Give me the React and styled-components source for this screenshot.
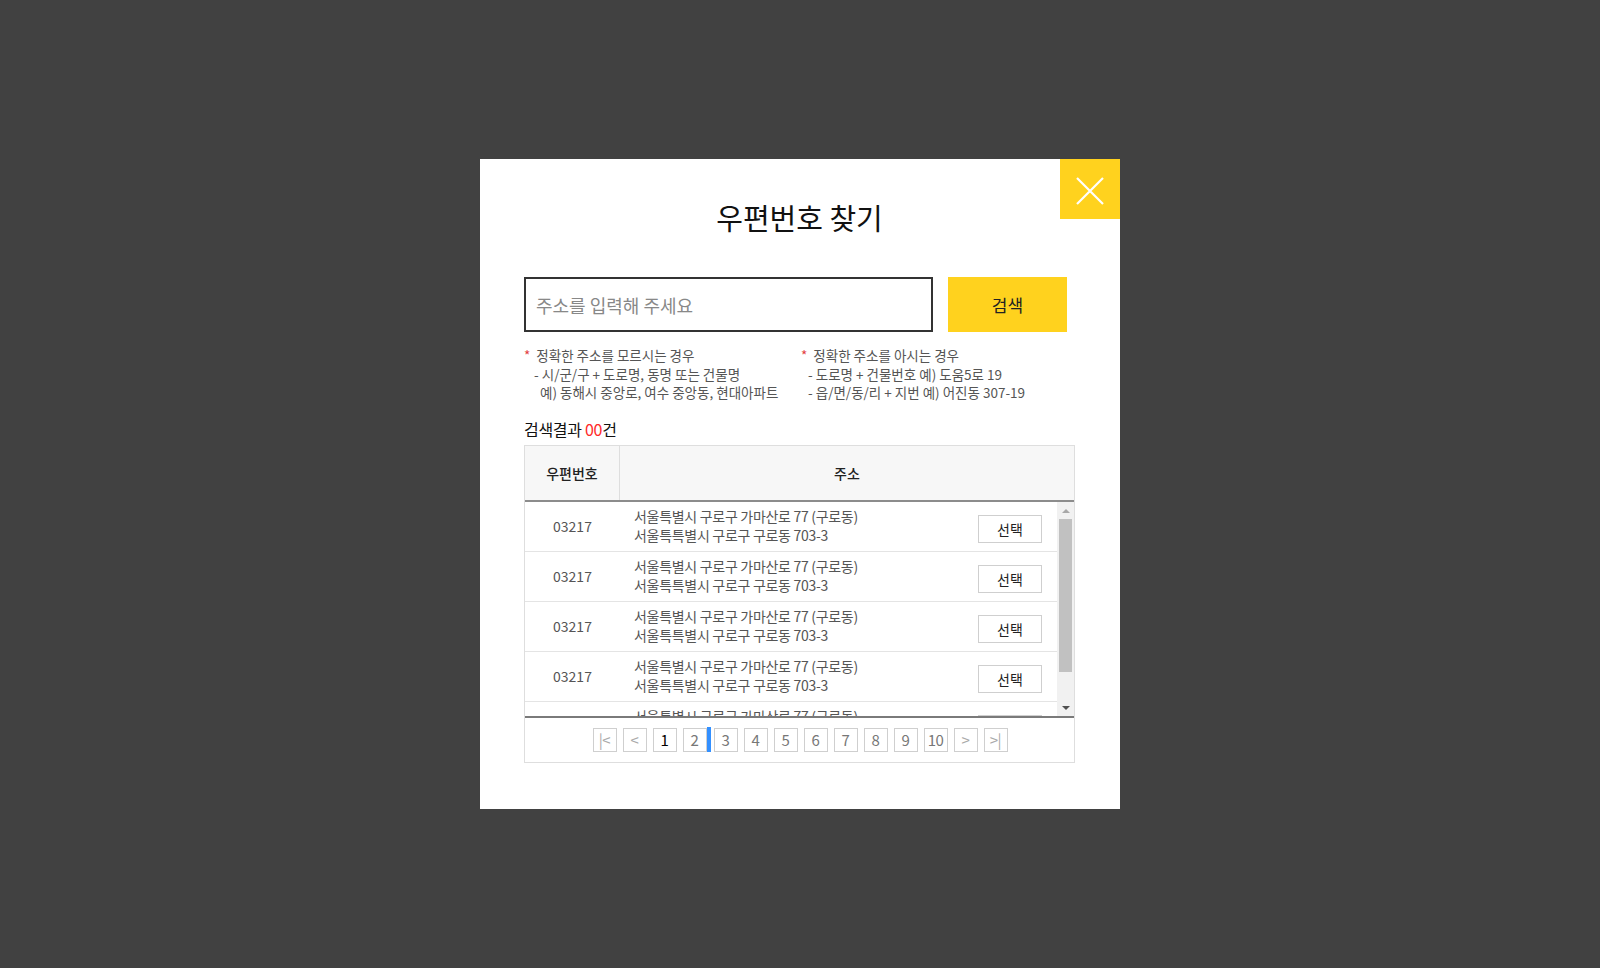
import { Fragment } from 'react';
import styled, { createGlobalStyle } from 'styled-components';

const GlobalStyle = createGlobalStyle`
  html, body {
    margin: 0;
    padding: 0;
    background: #414141;
  }
  body {
    font-family: "Noto Sans CJK KR", "Noto Sans", sans-serif;
    color: #333;
  }
  * {
    box-sizing: border-box;
  }
`;

const rows = [
  { zip: '03217', road: '서울특별시 구로구 가마산로 77 (구로동)', jibun: '서울특특별시 구로구 구로동 703-3' },
  { zip: '03217', road: '서울특별시 구로구 가마산로 77 (구로동)', jibun: '서울특특별시 구로구 구로동 703-3' },
  { zip: '03217', road: '서울특별시 구로구 가마산로 77 (구로동)', jibun: '서울특특별시 구로구 구로동 703-3' },
  { zip: '03217', road: '서울특별시 구로구 가마산로 77 (구로동)', jibun: '서울특특별시 구로구 구로동 703-3' },
  { zip: '03217', road: '서울특별시 구로구 가마산로 77 (구로동)', jibun: '서울특특별시 구로구 구로동 703-3' },
];

const pages = [1, 2, 3, 4, 5, 6, 7, 8, 9, 10];

const App = () => {
  return (
    <>
      <GlobalStyle />
      <Overlay>
        <Modal>
          <CloseButton aria-label="닫기">
            <svg width="28" height="28" viewBox="0 0 28 28">
              <path d="M1 1 L27 27 M27 1 L1 27" stroke="#fff" strokeWidth="2.2" fill="none" />
            </svg>
          </CloseButton>

          <Title>우편번호 찾기</Title>

          <SearchRow>
            <SearchInput placeholder="주소를 입력해 주세요" />
            <SearchButton>검색</SearchButton>
          </SearchRow>

          <Notes>
            <NoteCol>
              <NoteLine><Star>*</Star>정확한 주소를 모르시는 경우</NoteLine>
              <NoteLine $indent={10}>- 시/군/구 + 도로명, 동명 또는 건물명</NoteLine>
              <NoteLine $indent={16}>예) 동해시 중앙로, 여수 중앙동, 현대아파트</NoteLine>
            </NoteCol>
            <NoteCol>
              <NoteLine><Star>*</Star>정확한 주소를 아시는 경우</NoteLine>
              <NoteLine $indent={7}>- 도로명 + 건물번호 예) 도움5로 19</NoteLine>
              <NoteLine $indent={7}>- 읍/면/동/리 + 지번 예) 어진동 307-19</NoteLine>
            </NoteCol>
          </Notes>

          <ResultLabel>검색결과 <Count>00</Count>건</ResultLabel>

          <Table>
            <HeadRow>
              <ZipHead>우편번호</ZipHead>
              <AddrHead>주소</AddrHead>
            </HeadRow>
            <Body>
              <List>
                {rows.map((r, i) => (
                  <Row key={i}>
                    <ZipCell>{r.zip}</ZipCell>
                    <AddrCell>
                      <div>{r.road}</div>
                      <div>{r.jibun}</div>
                    </AddrCell>
                    <SelectButton>선택</SelectButton>
                  </Row>
                ))}
              </List>
              <ScrollTrack>
                <Arrow $up />
                <Thumb />
                <Arrow />
              </ScrollTrack>
            </Body>
            <Pager>
              <PageBtn $muted>|&lt;</PageBtn>
              <PageBtn $muted>&lt;</PageBtn>
              {pages.map((p) => (
                <Fragment key={p}>
                  <PageBtn $active={p === 1}>{p}</PageBtn>
                  {p === 2 && <Caret />}
                </Fragment>
              ))}
              <PageBtn $muted>&gt;</PageBtn>
              <PageBtn $muted>&gt;|</PageBtn>
            </Pager>
          </Table>
        </Modal>
      </Overlay>
    </>
  );
};

const Overlay = styled.div`
  width: 100vw;
  height: 100vh;
  display: flex;
  align-items: center;
  justify-content: center;
`;

const Modal = styled.div`
  position: relative;
  width: 640px;
  height: 650px;
  background: #fff;
  padding: 40px 45px 0 44px;
`;

const CloseButton = styled.button`
  position: absolute;
  top: 0;
  right: 0;
  width: 60px;
  height: 60px;
  border: 0;
  padding: 3px 0 0 0;
  background: #ffd21e;
  display: flex;
  align-items: center;
  justify-content: center;
  cursor: pointer;
`;

const Title = styled.h2`
  margin: 0;
  height: 36px;
  line-height: 36px;
  text-align: center;
  font-size: 29px;
  font-weight: 400;
  color: #111;
`;

const SearchRow = styled.div`
  display: flex;
  gap: 15px;
  margin-top: 42px;
`;

const SearchInput = styled.input`
  width: 409px;
  height: 55px;
  border: 2px solid #333;
  padding: 0 10px;
  font-family: inherit;
  font-size: 18px;
  color: #333;
  outline: none;
  &::placeholder {
    color: #888;
  }
`;

const SearchButton = styled.button`
  width: 119px;
  height: 55px;
  border: 0;
  background: #ffd21e;
  font-family: inherit;
  font-size: 17px;
  color: #222;
  cursor: pointer;
`;

const Notes = styled.div`
  display: grid;
  grid-template-columns: 277px 1fr;
  margin-top: 14px;
`;

const NoteCol = styled.div`
  display: flex;
  flex-direction: column;
`;

const NoteLine = styled.div`
  font-size: 13.5px;
  line-height: 18.5px;
  color: #555;
  padding-left: ${(p) => p.$indent || 0}px;
  white-space: nowrap;
`;

const Star = styled.span`
  color: #e23b3b;
  margin-right: 6px;
`;

const ResultLabel = styled.div`
  margin-top: 16px;
  font-size: 16px;
  line-height: 22px;
  color: #111;
  letter-spacing: -0.3px;
`;

const Count = styled.span`
  color: #ff2a2a;
`;

const Table = styled.div`
  margin-top: 5px;
  width: 551px;
  border: 1px solid #dedede;
`;

const HeadRow = styled.div`
  display: flex;
  height: 56px;
  background: #f7f7f7;
  border-bottom: 2px solid #8c8c8c;
`;

const ZipHead = styled.div`
  width: 95px;
  border-right: 1px solid #dedede;
  display: flex;
  align-items: center;
  justify-content: center;
  font-size: 14px;
  font-weight: 500;
  color: #222;
`;

const AddrHead = styled(ZipHead)`
  flex: 1;
  border-right: 0;
`;

const Body = styled.div`
  display: flex;
  height: 216px;
  border-bottom: 2px solid #7a7a7a;
  overflow: hidden;
`;

const List = styled.div`
  flex: 1;
  overflow: hidden;
`;

const Row = styled.div`
  display: flex;
  align-items: center;
  height: 50px;
  border-bottom: 1px solid #e4e4e4;
  font-size: 14px;
  color: #555;
`;

const ZipCell = styled.div`
  width: 95px;
  text-align: center;
`;

const AddrCell = styled.div`
  flex: 1;
  padding-left: 14px;
  line-height: 19px;
  letter-spacing: -0.3px;
  padding-bottom: 1px;
`;

const SelectButton = styled.button`
  width: 64px;
  height: 28px;
  margin: 6px 15px 0 0;
  border: 1px solid #cfcfcf;
  background: #fff;
  font-family: inherit;
  font-size: 14px;
  color: #222;
  padding: 0;
`;

const ScrollTrack = styled.div`
  width: 17px;
  background: #f1f1f1;
  display: flex;
  flex-direction: column;
  align-items: center;
  padding: 0 2px;
`;

const Arrow = styled.div`
  width: 0;
  height: 0;
  margin: ${(p) => (p.$up ? '7px 0 6px' : 'auto 0 6px')};
  border-left: 4px solid transparent;
  border-right: 4px solid transparent;
  ${(p) => (p.$up ? 'border-bottom: 4px solid #a8a8a8;' : 'border-top: 4px solid #505050;')}
`;

const Thumb = styled.div`
  width: 13px;
  height: 153px;
  background: #c1c1c1;
`;

const Pager = styled.div`
  height: 44px;
  display: flex;
  align-items: center;
  justify-content: center;
  gap: 6px;
  padding-left: 1px;
`;

const PageBtn = styled.button`
  width: 24px;
  height: 24px;
  padding: 0;
  border: 1px solid #cfcfcf;
  background: #fff;
  font-family: inherit;
  font-size: 15px;
  line-height: 20px;
  letter-spacing: -0.5px;
  color: ${(p) => (p.$active ? '#000' : p.$muted ? '#aaa' : '#777')};
`;

const Caret = styled.span`
  width: 4px;
  height: 25px;
  background: #3390ff;
  margin: 0 -3px 0 -6px;
`;

export default App;
